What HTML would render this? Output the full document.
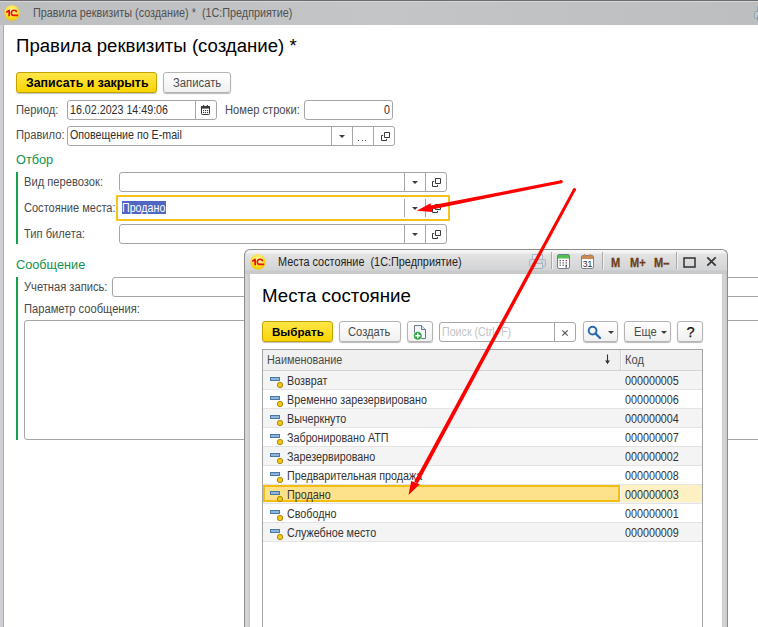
<!DOCTYPE html>
<html><head><meta charset="utf-8">
<style>
*{box-sizing:border-box;margin:0;padding:0}
html,body{width:758px;height:627px;overflow:hidden;background:#fff;font-family:"Liberation Sans",sans-serif;position:relative}
.a{position:absolute}
.t{position:absolute;white-space:nowrap;transform-origin:0 0}
.inp{position:absolute;border:1px solid #a6a6a6;border-radius:3px;background:#fff}
.dv{position:absolute;top:0;bottom:0;width:1px;background:#a6a6a6}
.btn{position:absolute;border:1px solid #b4b4b4;border-radius:3px;background:linear-gradient(#ffffff,#f0f0f0);box-shadow:0 1px 1px rgba(0,0,0,.28)}
.ybtn{position:absolute;border:1px solid #c1a200;border-radius:3px;background:linear-gradient(#ffe64a,#f9d500);box-shadow:0 1px 1px rgba(0,0,0,.25)}
</style></head><body>
<div class="a" style="left:0px;top:0px;width:758px;height:1px;background:#6d6d6d"></div>
<div class="a" style="left:0px;top:1px;width:758px;height:1px;background:#d6d6d6"></div>
<div class="a" style="left:0px;top:2px;width:758px;height:23px;background:linear-gradient(90deg,#bdbec0,#c4c5c7 50%,#bdbec0)"></div>
<div class="a" style="left:0px;top:25px;width:3px;height:602px;background:#cfd0d3"></div>
<div class="a" style="left:3px;top:25px;width:1px;height:602px;background:#a9aaac"></div>
<svg class="a" style="left:4px;top:4.5px" width="16" height="16" viewBox="0 0 16 16">
<defs><radialGradient id="lg12" cx="50%" cy="35%" r="65%"><stop offset="0" stop-color="#fff8b0"/><stop offset=".55" stop-color="#fde43a"/><stop offset="1" stop-color="#efc800"/></radialGradient></defs>
<circle cx="8" cy="8" r="7.7" fill="url(#lg12)"/>
<path d="M1.9 6.6 L4.6 4.8 L6 4.8 L6 11.2 L4.3 11.2 L4.3 7.3 L2.6 8.1 Z" fill="#e8101c"/>
<path d="M13.4 7.2 C13.3 5.4 11.9 4.5 10 4.5 C7.8 4.5 6.5 6 6.5 8 C6.5 9.8 7.5 11.2 9.3 11.2 L14.2 11.2 L14.2 9.6 L9.5 9.6 C8.6 9.5 8.2 8.8 8.2 8 C8.2 6.8 8.9 6 10 6 C10.9 6 11.5 6.5 11.6 7.2 Z" fill="#e8101c"/>
</svg>
<div class="t" style="left:33px;top:5.64px;font-size:12px;line-height:14px;color:#505050;font-weight:normal;transform:scaleX(0.9);">Правила реквизиты (создание) *&nbsp; (1С:Предприятие)</div>
<div class="t" style="left:15.8px;top:35.25px;font-size:19.2px;line-height:22px;color:#000;font-weight:normal;transform:scaleX(0.97);">Правила реквизиты (создание) *</div>
<div class="ybtn" style="left:16px;top:72px;width:141px;height:21px"></div>
<div class="t" style="left:26px;top:75.84px;font-size:12px;line-height:14px;color:#000;font-weight:bold;transform:scaleX(1.03);">Записать и закрыть</div>
<div class="btn" style="left:163px;top:72px;width:68px;height:21px"></div>
<div class="t" style="left:172.5px;top:75.84px;font-size:12px;line-height:14px;color:#4a4a4a;font-weight:normal;transform:scaleX(0.94);">Записать</div>
<div class="t" style="left:15.8px;top:102.84px;font-size:12px;line-height:14px;color:#4a4a4a;font-weight:normal;transform:scaleX(0.93);">Период:</div>
<div class="inp" style="left:67px;top:100px;width:150px;height:20px;"><div class="dv" style="left:127px"></div></div>
<svg class="a" style="left:201px;top:104px" width="10" height="11" viewBox="0 0 10 11"><rect x=".5" y="2.5" width="8" height="8" rx=".8" fill="#fff" stroke="#3c3c3c" stroke-width="1"/><rect x="0" y="2" width="9" height="2.6" fill="#3c3c3c"/><rect x="2" y="1" width="1.2" height="2" fill="#3c3c3c"/><rect x="5.8" y="1" width="1.2" height="2" fill="#3c3c3c"/><g fill="#3c3c3c"><rect x="2" y="6" width="1.1" height="1.1"/><rect x="4" y="6" width="1.1" height="1.1"/><rect x="6" y="6" width="1.1" height="1.1"/><rect x="2" y="8" width="1.1" height="1.1"/><rect x="4" y="8" width="1.1" height="1.1"/><rect x="6" y="8" width="1.1" height="1.1"/></g></svg>
<div class="t" style="left:70.2px;top:102.54px;font-size:12px;line-height:14px;color:#2e2e2e;font-weight:normal;transform:scaleX(0.89);">16.02.2023 14:49:06</div>
<div class="t" style="left:225.2px;top:102.84px;font-size:12px;line-height:14px;color:#4a4a4a;font-weight:normal;transform:scaleX(0.93);">Номер строки:</div>
<div class="inp" style="left:304px;top:100px;width:89px;height:20px;"></div>
<div class="t" style="left:383.6px;top:102.84px;font-size:12px;line-height:14px;color:#2e2e2e;font-weight:normal;transform:scaleX(0.89);">0</div>
<div class="t" style="left:15.8px;top:128.44px;font-size:12px;line-height:14px;color:#4a4a4a;font-weight:normal;transform:scaleX(0.93);">Правило:</div>
<div class="inp" style="left:67px;top:126px;width:328px;height:20px;"><div class="dv" style="left:263px"></div><div class="dv" style="left:284px"></div><div class="dv" style="left:305px"></div></div>
<div class="t" style="left:69.7px;top:128.44px;font-size:12px;line-height:14px;color:#2e2e2e;font-weight:normal;transform:scaleX(0.89);">Оповещение по E-mail</div>
<div class="a" style="left:338.5px;top:135.05px;width:0;height:0;border-left:3.0px solid transparent;border-right:3.0px solid transparent;border-top:3.5px solid #3c3c3c"></div>
<div class="a" style="left:358px;top:140px;width:1.3px;height:1.3px;background:#444"></div><div class="a" style="left:361.5px;top:140px;width:1.3px;height:1.3px;background:#444"></div><div class="a" style="left:365px;top:140px;width:1.3px;height:1.3px;background:#444"></div>
<svg class="a" style="left:380px;top:132px" width="11" height="10" viewBox="0 0 11 10"><path d="M4.5 0.5h5v5h-5z" fill="none" stroke="#3a3a3a" stroke-width="1"/><path d="M3.2 3.5h-1.7v5h5v-1.6" fill="none" stroke="#3a3a3a" stroke-width="1"/></svg>
<div class="t" style="left:16px;top:152.26px;font-size:13.4px;line-height:16px;color:#0f934a;font-weight:normal;transform:scaleX(0.95);">Отбор</div>
<div class="a" style="left:16px;top:172px;width:2px;height:72px;background:#16a04a"></div>
<div class="t" style="left:24px;top:174.74px;font-size:12px;line-height:14px;color:#4a4a4a;font-weight:normal;transform:scaleX(0.93);">Вид перевозок:</div>
<div class="inp" style="left:119px;top:172px;width:328px;height:20px;"><div class="dv" style="left:284px"></div><div class="dv" style="left:305px"></div></div>
<div class="a" style="left:411.5px;top:181.05px;width:0;height:0;border-left:3.0px solid transparent;border-right:3.0px solid transparent;border-top:3.5px solid #3c3c3c"></div>
<svg class="a" style="left:431px;top:178px" width="11" height="10" viewBox="0 0 11 10"><path d="M4.5 0.5h5v5h-5z" fill="none" stroke="#3a3a3a" stroke-width="1"/><path d="M3.2 3.5h-1.7v5h5v-1.6" fill="none" stroke="#3a3a3a" stroke-width="1"/></svg>
<div class="t" style="left:23.6px;top:200.74px;font-size:12px;line-height:14px;color:#4a4a4a;font-weight:normal;transform:scaleX(0.92);">Состояние места:</div>
<div class="a" style="left:116px;top:195px;width:334px;height:26px;border:2px solid #f4c31a"></div>
<div class="a" style="left:404px;top:199px;width:1px;height:18px;background:#a6a6a6"></div>
<div class="a" style="left:425px;top:199px;width:1px;height:18px;background:#a6a6a6"></div>
<div class="a" style="left:122px;top:201px;width:44px;height:13px;background:#4f66c2"></div>
<div class="t" style="left:122px;top:200.84px;font-size:12px;line-height:14px;color:#fff;font-weight:normal;transform:scaleX(0.89);">Продано</div>
<div class="a" style="left:411.5px;top:206.85px;width:0;height:0;border-left:3.0px solid transparent;border-right:3.0px solid transparent;border-top:3.5px solid #3c3c3c"></div>
<svg class="a" style="left:431px;top:204px" width="11" height="10" viewBox="0 0 11 10"><path d="M4.5 0.5h5v5h-5z" fill="none" stroke="#3a3a3a" stroke-width="1"/><path d="M3.2 3.5h-1.7v5h5v-1.6" fill="none" stroke="#3a3a3a" stroke-width="1"/></svg>
<div class="t" style="left:24px;top:226.64px;font-size:12px;line-height:14px;color:#4a4a4a;font-weight:normal;transform:scaleX(0.93);">Тип билета:</div>
<div class="inp" style="left:119px;top:224px;width:328px;height:20px;"><div class="dv" style="left:284px"></div><div class="dv" style="left:305px"></div></div>
<div class="a" style="left:411.5px;top:233.05px;width:0;height:0;border-left:3.0px solid transparent;border-right:3.0px solid transparent;border-top:3.5px solid #3c3c3c"></div>
<svg class="a" style="left:431px;top:230px" width="11" height="10" viewBox="0 0 11 10"><path d="M4.5 0.5h5v5h-5z" fill="none" stroke="#3a3a3a" stroke-width="1"/><path d="M3.2 3.5h-1.7v5h5v-1.6" fill="none" stroke="#3a3a3a" stroke-width="1"/></svg>
<div class="t" style="left:16px;top:257.36px;font-size:13.4px;line-height:16px;color:#0f934a;font-weight:normal;transform:scaleX(0.95);">Сообщение</div>
<div class="a" style="left:16px;top:277px;width:2px;height:163px;background:#16a04a"></div>
<div class="t" style="left:24px;top:279.64px;font-size:12px;line-height:14px;color:#4a4a4a;font-weight:normal;transform:scaleX(0.93);">Учетная запись:</div>
<div class="inp" style="left:112px;top:277px;width:660px;height:20px;"></div>
<div class="t" style="left:24px;top:302.44px;font-size:12px;line-height:14px;color:#4a4a4a;font-weight:normal;transform:scaleX(0.93);">Параметр сообщения:</div>
<div class="inp" style="left:24px;top:320px;width:740px;height:120px;"></div>
<div class="a" style="left:244px;top:249px;width:484px;height:400px;border-radius:6px 6px 0 0;border:1px solid #8c8c8c;border-bottom:none;background:linear-gradient(#f7f7f7 0,#f1f1f1 3px,#e3e3e4 4px,#d3d4d5 20px,#c8c9ca 21px,#c8c9ca 24px,#d8d9db 24px,#d8d9db)"></div>
<div class="a" style="left:245px;top:274px;width:5px;height:353px;background:linear-gradient(90deg,#d3d4d6,#d6d7d9 40%,#c3c4c6)"></div>
<div class="a" style="left:722px;top:274px;width:5px;height:353px;background:linear-gradient(90deg,#c9cacc,#d4d5d7 50%,#c6c7c9)"></div>
<div class="a" style="left:250px;top:274px;width:472px;height:353px;background:#fff"></div>
<svg class="a" style="left:250px;top:254px" width="16" height="16" viewBox="0 0 16 16">
<defs><radialGradient id="lg258" cx="50%" cy="35%" r="65%"><stop offset="0" stop-color="#fff8b0"/><stop offset=".55" stop-color="#fde43a"/><stop offset="1" stop-color="#efc800"/></radialGradient></defs>
<circle cx="8" cy="8" r="7.7" fill="url(#lg258)"/>
<path d="M1.9 6.6 L4.6 4.8 L6 4.8 L6 11.2 L4.3 11.2 L4.3 7.3 L2.6 8.1 Z" fill="#e8101c"/>
<path d="M13.4 7.2 C13.3 5.4 11.9 4.5 10 4.5 C7.8 4.5 6.5 6 6.5 8 C6.5 9.8 7.5 11.2 9.3 11.2 L14.2 11.2 L14.2 9.6 L9.5 9.6 C8.6 9.5 8.2 8.8 8.2 8 C8.2 6.8 8.9 6 10 6 C10.9 6 11.5 6.5 11.6 7.2 Z" fill="#e8101c"/>
</svg>
<div class="t" style="left:278px;top:254.74px;font-size:12px;line-height:14px;color:#222;font-weight:normal;transform:scaleX(0.905);">Места состояние&nbsp; (1С:Предприятие)</div>
<div class="t" style="left:262.3px;top:284.95px;font-size:19.2px;line-height:22px;color:#000;font-weight:normal;transform:scaleX(0.975);">Места состояние</div>
<div class="ybtn" style="left:262px;top:321px;width:71px;height:21px"></div>
<div class="t" style="left:272px;top:324.58px;font-size:11.6px;line-height:14px;color:#000;font-weight:bold;">Выбрать</div>
<div class="btn" style="left:339px;top:321px;width:62px;height:21px"></div>
<div class="t" style="left:348.2px;top:324.64px;font-size:12px;line-height:14px;color:#4a4a4a;font-weight:normal;transform:scaleX(0.93);">Создать</div>
<div class="btn" style="left:407px;top:321px;width:26px;height:21px"></div>
<div class="inp" style="left:439px;top:322px;width:137px;height:20px;"><div class="dv" style="left:114px"></div></div>
<div class="t" style="left:441.8px;top:324.64px;font-size:12px;line-height:14px;color:#c4c4c4;font-weight:normal;transform:scaleX(0.89);">Поиск (Ctrl+F)</div>
<svg class="a" style="left:561px;top:329px" width="8" height="8" viewBox="0 0 8 8"><path d="M1.3 1.3L6.7 6.7M6.7 1.3L1.3 6.7" stroke="#505050" stroke-width="1.1"/></svg>
<div class="btn" style="left:583px;top:321px;width:35px;height:21px"></div>
<div class="btn" style="left:624px;top:321px;width:47px;height:21px"></div>
<div class="t" style="left:634px;top:324.64px;font-size:12px;line-height:14px;color:#4a4a4a;font-weight:normal;transform:scaleX(0.93);">Еще</div>
<div class="a" style="left:660.5px;top:331.0px;width:0;height:0;border-left:3.0px solid transparent;border-right:3.0px solid transparent;border-top:3px solid #3c3c3c"></div>
<div class="btn" style="left:677px;top:321px;width:26px;height:21px"></div>
<svg class="a" style="left:528px;top:253px" width="19" height="17" viewBox="0 0 19 17" opacity=".45"><rect x="4.5" y="1.5" width="10" height="5" fill="#e8eef4" stroke="#6f8aa6"/><rect x="1.5" y="6.5" width="16" height="7" rx="1.5" fill="#c9d6e2" stroke="#6f8aa6"/><rect x="4.5" y="10.5" width="10" height="5" fill="#e8eef4" stroke="#6f8aa6"/><rect x="13" y="8.5" width="2" height="1" fill="#6f8aa6"/></svg>
<div class="a" style="left:551px;top:252px;width:1px;height:17px;background:#a9a9a9"></div>
<div class="a" style="left:552px;top:252px;width:1px;height:17px;background:#f2f2f2"></div>
<svg class="a" style="left:557px;top:254px" width="13" height="15" viewBox="0 0 13 15"><rect x=".5" y=".5" width="12" height="14" rx="1.5" fill="#fff" stroke="#6e7d8a"/><rect x="1" y="1" width="11" height="3.5" fill="#52bf52"/><g fill="#505a64"><rect x="2.5" y="6" width="1.4" height="1.2"/><rect x="5.5" y="6" width="1.4" height="1.2"/><rect x="2.5" y="8.3" width="1.4" height="1.2"/><rect x="5.5" y="8.3" width="1.4" height="1.2"/><rect x="8.5" y="8.3" width="1.4" height="1.2"/><rect x="2.5" y="10.6" width="1.4" height="1.2"/><rect x="5.5" y="10.6" width="1.4" height="1.2"/><rect x="8.5" y="10.6" width="1.4" height="3"/></g><rect x="8.5" y="6" width="1.4" height="1.2" fill="#e02020"/></svg>
<svg class="a" style="left:581px;top:254px" width="13" height="15" viewBox="0 0 13 15"><rect x=".5" y="1.5" width="12" height="13" rx="1.5" fill="#fff" stroke="#7a8590"/><rect x="1" y="2" width="11" height="3" fill="#c98a56"/><rect x="3" y="0" width="1.3" height="3" fill="#c98a56"/><rect x="8.7" y="0" width="1.3" height="3" fill="#c98a56"/><text x="6.5" y="13" font-family="Liberation Sans" font-size="9.5" text-anchor="middle" fill="#2a2a2a" transform="translate(6.5 0) scale(.9 1) translate(-6.5 0)">31</text></svg>
<div class="a" style="left:602px;top:252px;width:1px;height:17px;background:#a9a9a9"></div>
<div class="a" style="left:603px;top:252px;width:1px;height:17px;background:#f2f2f2"></div>
<div class="t" style="left:610.6px;top:256.00px;font-size:13px;line-height:14px;color:#6e3e18;font-weight:bold;transform:scaleX(0.85);-webkit-text-stroke:.3px #6e3e18;">M</div>
<div class="t" style="left:630.3px;top:256.00px;font-size:13px;line-height:14px;color:#6e3e18;font-weight:bold;transform:scaleX(0.85);-webkit-text-stroke:.3px #6e3e18;">M+</div>
<div class="t" style="left:653.5px;top:256.00px;font-size:13px;line-height:14px;color:#6e3e18;font-weight:bold;transform:scaleX(0.85);-webkit-text-stroke:.3px #6e3e18;">M&#8211;</div>
<div class="a" style="left:676px;top:252px;width:1px;height:17px;background:#a9a9a9"></div>
<div class="a" style="left:677px;top:252px;width:1px;height:17px;background:#f2f2f2"></div>
<svg class="a" style="left:683px;top:257px" width="13" height="11" viewBox="0 0 13 11"><rect x="1" y="1" width="11" height="9" fill="none" stroke="#3a3a3a" stroke-width="1.6"/></svg>
<svg class="a" style="left:706px;top:256px" width="11" height="11" viewBox="0 0 11 11"><path d="M1.3 1.3L9.7 9.7M9.7 1.3L1.3 9.7" stroke="#3a3a3a" stroke-width="1.8"/></svg>
<svg class="a" style="left:753px;top:5px" width="19" height="17" viewBox="0 0 19 17" opacity=".45"><rect x="4.5" y="1.5" width="10" height="5" fill="#e8eef4" stroke="#6f8aa6"/><rect x="1.5" y="6.5" width="16" height="7" rx="1.5" fill="#c9d6e2" stroke="#6f8aa6"/><rect x="4.5" y="10.5" width="10" height="5" fill="#e8eef4" stroke="#6f8aa6"/></svg>
<svg class="a" style="left:411px;top:324px" width="18" height="17" viewBox="0 0 18 17"><path d="M3.5 1.5h7l4 4v9h-11z" fill="#f4f7fa" stroke="#6b7886"/><path d="M10.5 1.5v4h4" fill="#dfe5eb" stroke="#6b7886"/><circle cx="6.8" cy="11.8" r="4.3" fill="#2aa642" stroke="#fff" stroke-width=".6"/><path d="M6.8 9.3v5M4.3 11.8h5" stroke="#fff" stroke-width="1.5"/></svg>
<svg class="a" style="left:587px;top:325px" width="15" height="14" viewBox="0 0 15 14"><circle cx="5.6" cy="5.6" r="3.9" fill="none" stroke="#2a6db0" stroke-width="2"/><path d="M8.4 8.4L13 13" stroke="#2a6db0" stroke-width="2.4" stroke-linecap="round"/></svg>
<div class="a" style="left:607.5px;top:331.3px;width:0;height:0;border-left:3.0px solid transparent;border-right:3.0px solid transparent;border-top:3px solid #3c3c3c"></div>
<div class="t" style="left:686.4px;top:325.24px;font-size:14.6px;line-height:14px;color:#111;font-weight:normal;-webkit-text-stroke:.25px #111;">?</div>
<div class="a" style="left:262px;top:349px;width:441px;height:290px;border:1px solid #a3a3a3;background:#fff"></div>
<div class="a" style="left:263px;top:350px;width:439px;height:21px;background:#f0f0f0;border-bottom:1px solid #d4d4d4"></div>
<div class="a" style="left:620px;top:350px;width:1px;height:20px;background:#d2d2d2"></div>
<div class="a" style="left:621px;top:350px;width:1px;height:20px;background:#fafafa"></div>
<div class="t" style="left:267.3px;top:352.74px;font-size:12px;line-height:14px;color:#4a4a4a;font-weight:normal;transform:scaleX(0.905);">Наименование</div>
<div class="t" style="left:625.2px;top:352.74px;font-size:12px;line-height:14px;color:#4a4a4a;font-weight:normal;transform:scaleX(0.93);">Код</div>
<svg class="a" style="left:604px;top:354px" width="7" height="11" viewBox="0 0 7 11"><path d="M3.5 0.5V9.5" stroke="#333" stroke-width="1.1"/><path d="M1 6.5L3.5 10L6 6.5Z" fill="#333"/></svg>
<div class="a" style="left:263px;top:371px;width:439px;height:19px;background:#f4f4f4;border-bottom:1px solid #e3e3e3"></div>
<svg class="a" style="left:269px;top:376px" width="16" height="13" viewBox="0 0 16 13"><rect x="1.5" y="1.5" width="9" height="3" fill="#8cb4dc" stroke="#4a78a4" stroke-width="1"/><circle cx="11" cy="9" r="2.7" fill="#f3c418" stroke="#a88600" stroke-width=".9"/></svg>
<div class="t" style="left:287.3px;top:373.67px;font-size:12.5px;line-height:14px;color:#333;font-weight:normal;transform:scaleX(0.86);">Возврат</div>
<div class="t" style="left:625.2px;top:373.67px;font-size:12.5px;line-height:14px;color:#333;font-weight:normal;transform:scaleX(0.86);">000000005</div>
<div class="a" style="left:263px;top:390px;width:439px;height:19px;background:#fff;border-bottom:1px solid #e3e3e3"></div>
<svg class="a" style="left:269px;top:395px" width="16" height="13" viewBox="0 0 16 13"><rect x="1.5" y="1.5" width="9" height="3" fill="#8cb4dc" stroke="#4a78a4" stroke-width="1"/><circle cx="11" cy="9" r="2.7" fill="#f3c418" stroke="#a88600" stroke-width=".9"/></svg>
<div class="t" style="left:287.3px;top:392.67px;font-size:12.5px;line-height:14px;color:#333;font-weight:normal;transform:scaleX(0.86);">Временно зарезервировано</div>
<div class="t" style="left:625.2px;top:392.67px;font-size:12.5px;line-height:14px;color:#333;font-weight:normal;transform:scaleX(0.86);">000000006</div>
<div class="a" style="left:263px;top:409px;width:439px;height:19px;background:#f4f4f4;border-bottom:1px solid #e3e3e3"></div>
<svg class="a" style="left:269px;top:414px" width="16" height="13" viewBox="0 0 16 13"><rect x="1.5" y="1.5" width="9" height="3" fill="#8cb4dc" stroke="#4a78a4" stroke-width="1"/><circle cx="11" cy="9" r="2.7" fill="#f3c418" stroke="#a88600" stroke-width=".9"/></svg>
<div class="t" style="left:287.3px;top:411.67px;font-size:12.5px;line-height:14px;color:#333;font-weight:normal;transform:scaleX(0.86);">Вычеркнуто</div>
<div class="t" style="left:625.2px;top:411.67px;font-size:12.5px;line-height:14px;color:#333;font-weight:normal;transform:scaleX(0.86);">000000004</div>
<div class="a" style="left:263px;top:428px;width:439px;height:19px;background:#fff;border-bottom:1px solid #e3e3e3"></div>
<svg class="a" style="left:269px;top:433px" width="16" height="13" viewBox="0 0 16 13"><rect x="1.5" y="1.5" width="9" height="3" fill="#8cb4dc" stroke="#4a78a4" stroke-width="1"/><circle cx="11" cy="9" r="2.7" fill="#f3c418" stroke="#a88600" stroke-width=".9"/></svg>
<div class="t" style="left:287.3px;top:430.67px;font-size:12.5px;line-height:14px;color:#333;font-weight:normal;transform:scaleX(0.86);">Забронировано АТП</div>
<div class="t" style="left:625.2px;top:430.67px;font-size:12.5px;line-height:14px;color:#333;font-weight:normal;transform:scaleX(0.86);">000000007</div>
<div class="a" style="left:263px;top:447px;width:439px;height:19px;background:#f4f4f4;border-bottom:1px solid #e3e3e3"></div>
<svg class="a" style="left:269px;top:452px" width="16" height="13" viewBox="0 0 16 13"><rect x="1.5" y="1.5" width="9" height="3" fill="#8cb4dc" stroke="#4a78a4" stroke-width="1"/><circle cx="11" cy="9" r="2.7" fill="#f3c418" stroke="#a88600" stroke-width=".9"/></svg>
<div class="t" style="left:287.3px;top:449.67px;font-size:12.5px;line-height:14px;color:#333;font-weight:normal;transform:scaleX(0.86);">Зарезервировано</div>
<div class="t" style="left:625.2px;top:449.67px;font-size:12.5px;line-height:14px;color:#333;font-weight:normal;transform:scaleX(0.86);">000000002</div>
<div class="a" style="left:263px;top:466px;width:439px;height:19px;background:#fff;border-bottom:1px solid #e3e3e3"></div>
<svg class="a" style="left:269px;top:471px" width="16" height="13" viewBox="0 0 16 13"><rect x="1.5" y="1.5" width="9" height="3" fill="#8cb4dc" stroke="#4a78a4" stroke-width="1"/><circle cx="11" cy="9" r="2.7" fill="#f3c418" stroke="#a88600" stroke-width=".9"/></svg>
<div class="t" style="left:287.3px;top:468.67px;font-size:12.5px;line-height:14px;color:#333;font-weight:normal;transform:scaleX(0.86);">Предварительная продажа</div>
<div class="t" style="left:625.2px;top:468.67px;font-size:12.5px;line-height:14px;color:#333;font-weight:normal;transform:scaleX(0.86);">000000008</div>
<div class="a" style="left:263px;top:485px;width:439px;height:19px;background:#f4f4f4;border-bottom:1px solid #e3e3e3"></div>
<div class="a" style="left:263px;top:485px;width:357px;height:17px;background:#fde18b;border:2px solid #f4be10"></div>
<div class="a" style="left:621px;top:485px;width:81px;height:17px;background:#fdf0c3"></div>
<svg class="a" style="left:269px;top:490px" width="16" height="13" viewBox="0 0 16 13"><rect x="1.5" y="1.5" width="9" height="3" fill="#8cb4dc" stroke="#4a78a4" stroke-width="1"/><circle cx="11" cy="9" r="2.7" fill="#f3c418" stroke="#a88600" stroke-width=".9"/></svg>
<div class="t" style="left:287.3px;top:487.67px;font-size:12.5px;line-height:14px;color:#333;font-weight:normal;transform:scaleX(0.86);">Продано</div>
<div class="t" style="left:625.2px;top:487.67px;font-size:12.5px;line-height:14px;color:#333;font-weight:normal;transform:scaleX(0.86);">000000003</div>
<div class="a" style="left:263px;top:504px;width:439px;height:19px;background:#fff;border-bottom:1px solid #e3e3e3"></div>
<svg class="a" style="left:269px;top:509px" width="16" height="13" viewBox="0 0 16 13"><rect x="1.5" y="1.5" width="9" height="3" fill="#8cb4dc" stroke="#4a78a4" stroke-width="1"/><circle cx="11" cy="9" r="2.7" fill="#f3c418" stroke="#a88600" stroke-width=".9"/></svg>
<div class="t" style="left:287.3px;top:506.67px;font-size:12.5px;line-height:14px;color:#333;font-weight:normal;transform:scaleX(0.86);">Свободно</div>
<div class="t" style="left:625.2px;top:506.67px;font-size:12.5px;line-height:14px;color:#333;font-weight:normal;transform:scaleX(0.86);">000000001</div>
<div class="a" style="left:263px;top:523px;width:439px;height:19px;background:#f4f4f4;border-bottom:1px solid #e3e3e3"></div>
<svg class="a" style="left:269px;top:528px" width="16" height="13" viewBox="0 0 16 13"><rect x="1.5" y="1.5" width="9" height="3" fill="#8cb4dc" stroke="#4a78a4" stroke-width="1"/><circle cx="11" cy="9" r="2.7" fill="#f3c418" stroke="#a88600" stroke-width=".9"/></svg>
<div class="t" style="left:287.3px;top:525.67px;font-size:12.5px;line-height:14px;color:#333;font-weight:normal;transform:scaleX(0.86);">Служебное место</div>
<div class="t" style="left:625.2px;top:525.67px;font-size:12.5px;line-height:14px;color:#333;font-weight:normal;transform:scaleX(0.86);">000000009</div>
<svg class="a" style="left:0;top:0" width="758" height="627" viewBox="0 0 758 627"><g fill="#ff0000"><circle cx="561.2" cy="181.7" r="1.6"/><circle cx="574.4" cy="189.6" r="1.6"/><path d="M560.91 180.23 L429.61 205.84 L430.39 209.76 L561.49 183.17Z"/><path d="M573.08 188.89 L414.24 481.55 L417.76 483.45 L575.72 190.31Z"/><path d="M416.7 210.7L430.5 203.3L432.3 212.1Z"/><path d="M408.5 495.1L411.2 481.1L419.7 484.3Z"/></g></svg>
</body></html>
